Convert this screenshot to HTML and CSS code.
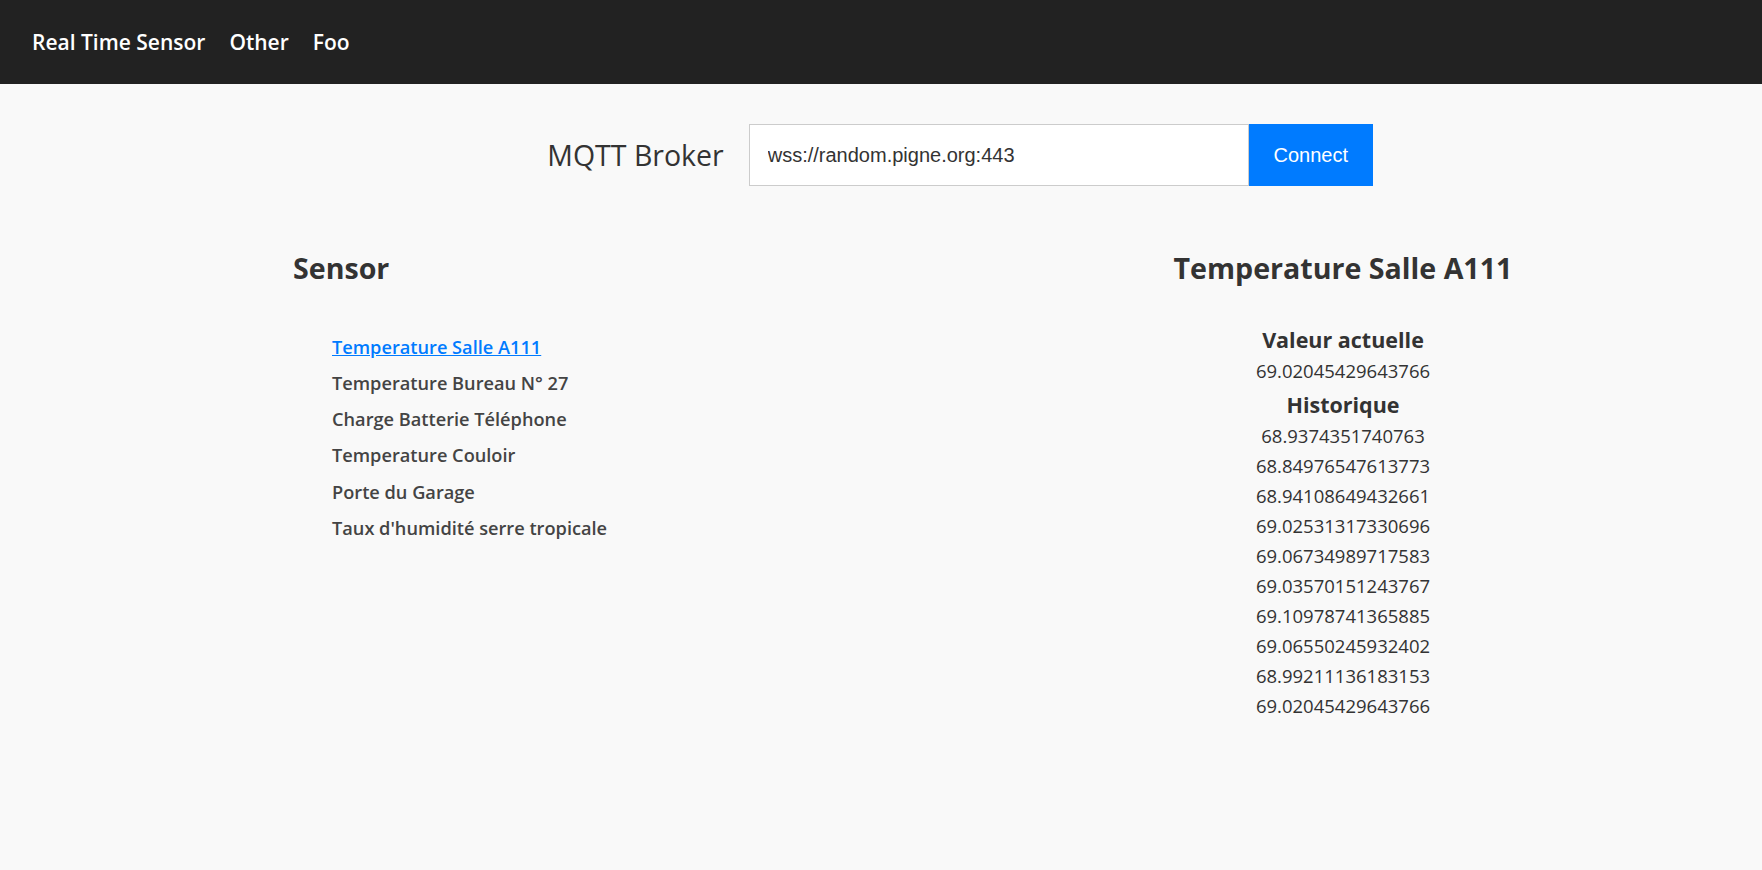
FILE: index.html
```html
<!DOCTYPE html>
<html lang="fr">
<head>
<meta charset="utf-8">
<title>Real Time Sensor</title>
<link rel="stylesheet" href="styles.css">
</head>
<body>
<nav class="navbar">
  <a class="nav-link" href="#">Real Time Sensor</a>
  <a class="nav-link" href="#">Other</a>
  <a class="nav-link" href="#">Foo</a>
</nav>
<main class="page">
  <form class="broker">
    <label class="broker-label" for="broker">MQTT Broker</label>
    <input class="broker-input" id="broker" type="text" value="wss://random.pigne.org:443">
    <button class="broker-btn" type="button">Connect</button>
  </form>
  <div class="columns">
    <section class="sensors">
      <h2 class="section-title">Sensor</h2>
      <ul class="sensor-list">
        <li><a class="sensor active" href="#">Temperature Salle A111</a></li>
        <li><a class="sensor" href="#">Temperature Bureau N° 27</a></li>
        <li><a class="sensor" href="#">Charge Batterie Téléphone</a></li>
        <li><a class="sensor" href="#">Temperature Couloir</a></li>
        <li><a class="sensor" href="#">Porte du Garage</a></li>
        <li><a class="sensor" href="#">Taux d'humidité serre tropicale</a></li>
      </ul>
    </section>
    <section class="detail">
      <h2 class="section-title">Temperature Salle A111</h2>
      <h3 class="sub-title first">Valeur actuelle</h3>
      <p class="value">69.02045429643766</p>
      <h3 class="sub-title second">Historique</h3>
      <ul class="history">
        <li>68.9374351740763</li>
        <li>68.84976547613773</li>
        <li>68.94108649432661</li>
        <li>69.02531317330696</li>
        <li>69.06734989717583</li>
        <li>69.03570151243767</li>
        <li>69.10978741365885</li>
        <li>69.06550245932402</li>
        <li>68.99211136183153</li>
        <li>69.02045429643766</li>
      </ul>
    </section>
  </div>
</main>
</body>
</html>
```
FILE: styles.css
```css
html, body {
  margin: 0;
  padding: 0;
}
body {
  background: #f9f9f9;
  color: #333;
  font-family: "Open Sans", "Noto Sans", sans-serif;
}
.navbar {
  height: 84px;
  background: #222;
  display: flex;
  align-items: center;
  gap: 24px;
  padding-left: 32px;
}
.nav-link {
  color: #fff;
  text-decoration: none;
  font-size: 21px;
  font-weight: 600;
}
.broker {
  margin: 40px 0 0 0;
  display: flex;
  align-items: center;
  justify-content: center;
  padding-left: 158px;
}
.broker-label {
  font-size: 28.5px;
  font-weight: 400;
  color: #333;
  margin-right: 25px;
}
.broker-input {
  box-sizing: border-box;
  width: 500px;
  height: 62px;
  border: 1px solid #ccc;
  background: #fff;
  padding: 0 18px;
  font-family: "Liberation Sans", Arial, sans-serif;
  font-size: 20px;
  color: #333;
  outline: none;
}
.broker-btn {
  box-sizing: border-box;
  width: 124px;
  height: 62px;
  border: none;
  background: #007bff;
  color: #fff;
  font-family: "Liberation Sans", Arial, sans-serif;
  font-size: 20px;
  padding: 0;
}
.columns {
  display: flex;
  justify-content: space-between;
  margin-top: 65px;
  padding: 0 199px 0 293px;
}
.section-title {
  margin: 0;
  font-size: 28.6px;
  line-height: 34.8px;
  font-weight: 700;
  color: #333;
}
.sensor-list {
  list-style: none;
  margin: 43px 0 0 0;
  padding: 0 0 0 39px;
}
.sensor-list li {
  font-size: 18.2px;
  line-height: 36.2px;
}
.sensor {
  font-weight: 600;
  color: #444;
  text-decoration: none;
}
.sensor.active {
  color: #007bff;
  text-decoration: underline;
}
.detail {
  width: 440px;
  text-align: center;
}
.sub-title {
  margin: 0;
  font-size: 21.5px;
  line-height: 33px;
  font-weight: 700;
  color: #333;
}
.sub-title.first {
  margin-top: 37px;
}
.sub-title.second {
  margin-top: 2px;
}
.value {
  margin: 0;
  font-size: 18.5px;
  line-height: 30px;
}
.history {
  list-style: none;
  margin: 0;
  padding: 0;
  font-size: 18.5px;
  line-height: 30px;
}
```
